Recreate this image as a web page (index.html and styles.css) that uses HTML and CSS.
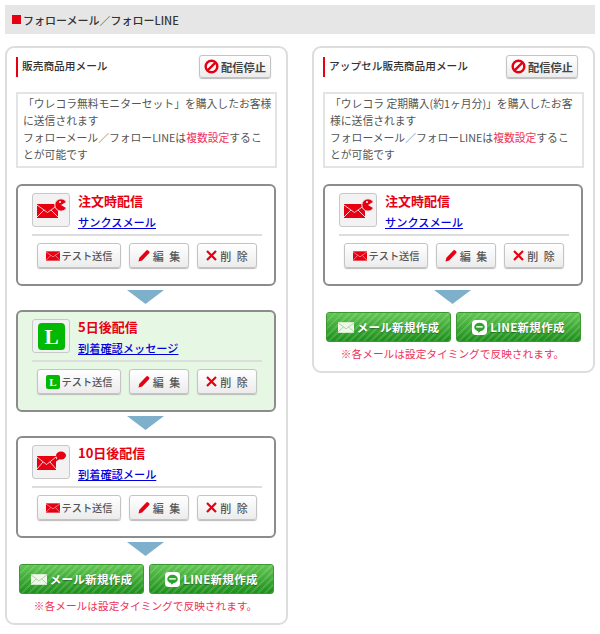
FILE: index.html
```html
<!DOCTYPE html>
<html lang="ja">
<head>
<meta charset="utf-8">
<title>フォローメール／フォローLINE</title>
<link rel="stylesheet" href="styles.css">
</head>
<body>
<svg class="defs" width="0" height="0">
  <symbol id="mail" viewBox="0 0 24 16"><rect width="24" height="16" fill="#e60012"/><path d="M0 1 12 9.500 24 1M0 15.500 8 7M24 15.500 16 7" fill="none" stroke="#fff" stroke-width=".8"/></symbol>
  <symbol id="stop" viewBox="0 0 16 16"><circle cx="8" cy="8" r="6.200" fill="#fff" stroke="#e60012" stroke-width="2.600"/><path d="M3.800 12.200 12.200 3.800" stroke="#e60012" stroke-width="2.600"/></symbol>
  <symbol id="pen" viewBox="0 0 13 14"><path d="M0.500 13.500 1.500 9.500 9 1.500Q10 .6 11 1.500L12 2.500Q13 3.500 12 4.500L4.500 12.500Z" fill="#e60012"/></symbol>
  <symbol id="cross" viewBox="0 0 11 11"><path d="M1 1 10 10M10 1 1 10" stroke="#e60012" stroke-width="2.200"/></symbol>
  <symbol id="mailw" viewBox="0 0 24 16"><rect width="24" height="16" fill="#eef7ea"/><path d="M0 1 12 10 24 1M0 15 8 7M24 15 16 7" fill="none" stroke="#8cc87c" stroke-width="1"/></symbol>
  <symbol id="line" viewBox="0 0 16 16"><rect width="16" height="16" rx="4" fill="#fff"/><ellipse cx="8" cy="7.400" rx="5.600" ry="4.600" fill="#2aa52a"/><path d="M6 11 7 13.500 10 11Z" fill="#2aa52a"/><rect x="4.500" y="6.600" width="7" height="1.500" fill="#fff"/></symbol>
  <symbol id="mail-order" viewBox="0 0 30 26"><rect x="1" y="7" width="21" height="14" fill="#e60012"/><path d="M1 8 11.500 15.500 22 8M1 20 8 13M22 20 15 13" fill="none" stroke="#fff" stroke-width=".8"/><circle cx="25" cy="8" r="6.200" fill="#e60012" stroke="#f2f2f2" stroke-width="1"/><path d="M25 8 31 4.500V11.500Z" fill="#f2f2f2"/><circle cx="24" cy="5" r="1" fill="#fff"/></symbol>
  <symbol id="mail-bubble" viewBox="0 0 30 26"><rect x="1" y="7" width="19" height="14" fill="#e60012"/><path d="M1 8 10.500 15.500 20 8M1 20 7 13M20 20 14 13" fill="none" stroke="#fff" stroke-width=".8"/><ellipse cx="25" cy="6.500" rx="5" ry="4" fill="#e60012"/><path d="M21 9 19 13 24 10Z" fill="#e60012"/></symbol>
</svg>

<header class="page-title"><span class="square"></span>フォローメール／フォローLINE</header>

<div class="columns">
  <section class="panel">
    <div class="panel-head">
      <h2 class="panel-title">販売商品用メール</h2>
      <button class="btn btn-stop"><svg class="i-stop"><use href="#stop"/></svg>配信停止</button>
    </div>
    <p class="note">「ウレコラ無料モニターセット」を購入したお客様<br>に送信されます<br>フォローメール／フォローLINEは<span class="pink">複数設定</span>するこ<br>とが可能です</p>

    <article class="card">
      <div class="card-top">
        <div class="thumb"><svg class="thumb-mail"><use href="#mail-order"/></svg></div>
        <div class="card-info"><div class="when">注文時配信</div><a class="subject" href="#">サンクスメール</a></div>
      </div>
      <div class="actions">
        <button class="btn btn-test"><svg class="i-mail"><use href="#mail"/></svg>テスト送信</button>
        <button class="btn btn-act"><svg class="i-pen"><use href="#pen"/></svg>編 集</button>
        <button class="btn btn-act"><svg class="i-x"><use href="#cross"/></svg>削 除</button>
      </div>
    </article>
    <div class="arrow"></div>

    <article class="card card-line">
      <div class="card-top">
        <div class="thumb"><svg class="thumb-line" viewBox="0 0 28 28"><rect width="28" height="28" rx="4" fill="#00b900"/><text x="14" y="22" text-anchor="middle" font-family="Liberation Serif" font-weight="700" font-size="22" fill="#fff">L</text></svg></div>
        <div class="card-info"><div class="when">5日後配信</div><a class="subject" href="#">到着確認メッセージ</a></div>
      </div>
      <div class="actions">
        <button class="btn btn-test"><svg class="i-l" viewBox="0 0 14 14"><rect width="14" height="14" rx="2" fill="#00b900"/><text x="7" y="11" text-anchor="middle" font-family="Liberation Serif" font-weight="700" font-size="11" fill="#fff">L</text></svg>テスト送信</button>
        <button class="btn btn-act"><svg class="i-pen"><use href="#pen"/></svg>編 集</button>
        <button class="btn btn-act"><svg class="i-x"><use href="#cross"/></svg>削 除</button>
      </div>
    </article>
    <div class="arrow"></div>

    <article class="card">
      <div class="card-top">
        <div class="thumb"><svg class="thumb-mail"><use href="#mail-bubble"/></svg></div>
        <div class="card-info"><div class="when">10日後配信</div><a class="subject" href="#">到着確認メール</a></div>
      </div>
      <div class="actions">
        <button class="btn btn-test"><svg class="i-mail"><use href="#mail"/></svg>テスト送信</button>
        <button class="btn btn-act"><svg class="i-pen"><use href="#pen"/></svg>編 集</button>
        <button class="btn btn-act"><svg class="i-x"><use href="#cross"/></svg>削 除</button>
      </div>
    </article>
    <div class="arrow"></div>

    <div class="create">
      <button class="btn-new"><svg class="i-mailw"><use href="#mailw"/></svg>メール新規作成</button>
      <button class="btn-new"><svg class="i-line"><use href="#line"/></svg>LINE新規作成</button>
    </div>
    <p class="hint">※各メールは設定タイミングで反映されます。</p>
  </section>

  <section class="panel">
    <div class="panel-head">
      <h2 class="panel-title">アップセル販売商品用メール</h2>
      <button class="btn btn-stop"><svg class="i-stop"><use href="#stop"/></svg>配信停止</button>
    </div>
    <p class="note">「ウレコラ 定期購入(約1ヶ月分)」を購入したお客<br>様に送信されます<br>フォローメール／フォローLINEは<span class="pink">複数設定</span>するこ<br>とが可能です</p>

    <article class="card">
      <div class="card-top">
        <div class="thumb"><svg class="thumb-mail"><use href="#mail-order"/></svg></div>
        <div class="card-info"><div class="when">注文時配信</div><a class="subject" href="#">サンクスメール</a></div>
      </div>
      <div class="actions">
        <button class="btn btn-test"><svg class="i-mail"><use href="#mail"/></svg>テスト送信</button>
        <button class="btn btn-act"><svg class="i-pen"><use href="#pen"/></svg>編 集</button>
        <button class="btn btn-act"><svg class="i-x"><use href="#cross"/></svg>削 除</button>
      </div>
    </article>
    <div class="arrow"></div>

    <div class="create">
      <button class="btn-new"><svg class="i-mailw"><use href="#mailw"/></svg>メール新規作成</button>
      <button class="btn-new"><svg class="i-line"><use href="#line"/></svg>LINE新規作成</button>
    </div>
    <p class="hint">※各メールは設定タイミングで反映されます。</p>
  </section>
</div>
</body>
</html>
```
FILE: styles.css
```css
* { box-sizing: border-box; }
html, body { margin: 0; padding: 0; }
body {
  padding: 5px 5px 0;
  background: #fff;
  color: #444;
  font-family: "Noto Sans CJK JP", "Liberation Sans", sans-serif;
  font-size: 12px;
}
.defs { display: block; height: 0; }
.page-title {
  height: 29px;
  display: flex;
  align-items: center;
  padding-left: 7px;
  background: #e6e6e6;
  color: #333;
  font-size: 11px;
  font-weight: 500;
}
.square { width: 9px; height: 9px; margin-right: 2px; background: #e60012; }
.columns { display: flex; justify-content: space-between; align-items: flex-start; margin-top: 12px; }
.panel {
  width: 283px;
  padding: 9px 9px 0;
  border: 2px solid #ddd;
  border-radius: 9px;
  background: #fff;
}
.panel-head { display: flex; justify-content: space-between; align-items: flex-start; height: 35px; padding-right: 6px; }
.panel-title {
  height: 20px;
  margin: 0;
  padding-left: 4px;
  border-left: 2px solid #e60012;
  color: #333;
  font-size: 10.700px;
  line-height: 17px;
  font-weight: 500;
}
.btn {
  display: inline-flex;
  align-items: center;
  justify-content: center;
  padding: 0;
  border: 1px solid #c4c4c4;
  border-radius: 3px;
  background: linear-gradient(#fff, #ececec);
  box-shadow: 0 1px 1px #bbb;
  color: #555;
  font-family: inherit;
  font-weight: 500;
  font-size: 11px;
}
.btn-stop { width: 72px; height: 23px; margin-top: -2px; gap: 2px; font-size: 11.200px; color: #444; font-weight: 700; }
.i-stop { width: 15px; height: 15px; }
.note {
  width: 261px;
  height: 76px;
  margin: 0 0 16px;
  padding: 1px 5px 0;
  border: 2px solid #e4e4e4;
  color: #555;
  font-size: 10.800px;
  line-height: 17px;
  white-space: nowrap;
}
.pink { color: #f0325a; }
.card {
  width: 260px;
  height: 102px;
  padding: 7px 12px 0 14px;
  border: 2px solid #8c8c8c;
  border-radius: 6px;
  background: #fff;
}
.card-line { background: #e6f7e4; }
.card-top { display: flex; height: 35px; }
.thumb {
  width: 38px;
  height: 34px;
  display: flex;
  align-items: center;
  justify-content: center;
  flex: none;
  margin-right: 8px;
  border: 1px solid #c8c8c8;
  border-radius: 3px;
  background: #f2f2f2;
}
.thumb-mail { width: 30px; height: 26px; }
.thumb-line { width: 27px; height: 27px; }
.card-info { display: flex; flex-direction: column; margin-top: -1px; }
.when { color: #e60012; font-size: 13px; line-height: 18px; font-weight: 700; }
.subject { margin-top: 4px; color: #00d; font-size: 11.200px; line-height: 16px; font-weight: 500; text-decoration: underline; }
.actions {
  display: flex;
  gap: 8px;
  height: 35px;
  margin-top: 6px;
  padding: 7px 5px 0;
  border-top: 2px solid #ddd;
}
.btn-test { width: 84px; height: 25px; gap: 2px; font-size: 10.200px; }
.btn-act { width: 60px; height: 25px; gap: 3px; word-spacing: 3px; }
.i-mail { width: 14px; height: 10px; }
.i-l { width: 14px; height: 14px; }
.i-pen { width: 12px; height: 13px; }
.i-x { width: 11px; height: 11px; }
.arrow {
  width: 37px;
  height: 14px;
  margin: 4px auto 6px 111px;
  background: #7fb0cb;
  clip-path: polygon(0 0, 100% 0, 50% 100%);
}
.arrow + .create { margin-top: 8px; }
.create { display: flex; gap: 5px; margin-left: 3px; }
.btn-new {
  width: 125px;
  height: 30px;
  display: inline-flex;
  align-items: center;
  justify-content: center;
  gap: 3px;
  padding: 0;
  border: 1px solid #3a9a30;
  border-radius: 3px;
  background:
    repeating-linear-gradient(135deg, rgba(255,255,255,.14) 0 2px, rgba(255,255,255,0) 2px 5px),
    linear-gradient(#63c654, #1c8f1a);
  color: #fff;
  font-family: inherit;
  font-size: 11.500px;
  font-weight: 700;
  letter-spacing: .3px;
  text-shadow: 0 1px 1px rgba(0,0,0,.35);
}
.i-mailw { width: 16px; height: 11px; }
.i-line { width: 15px; height: 15px; }
.hint {
  margin: 3px 0 9px;
  color: #f0325a;
  font-size: 10.700px;
  line-height: 17px;
  text-align: center;
  padding-right: 2px;
}
```
